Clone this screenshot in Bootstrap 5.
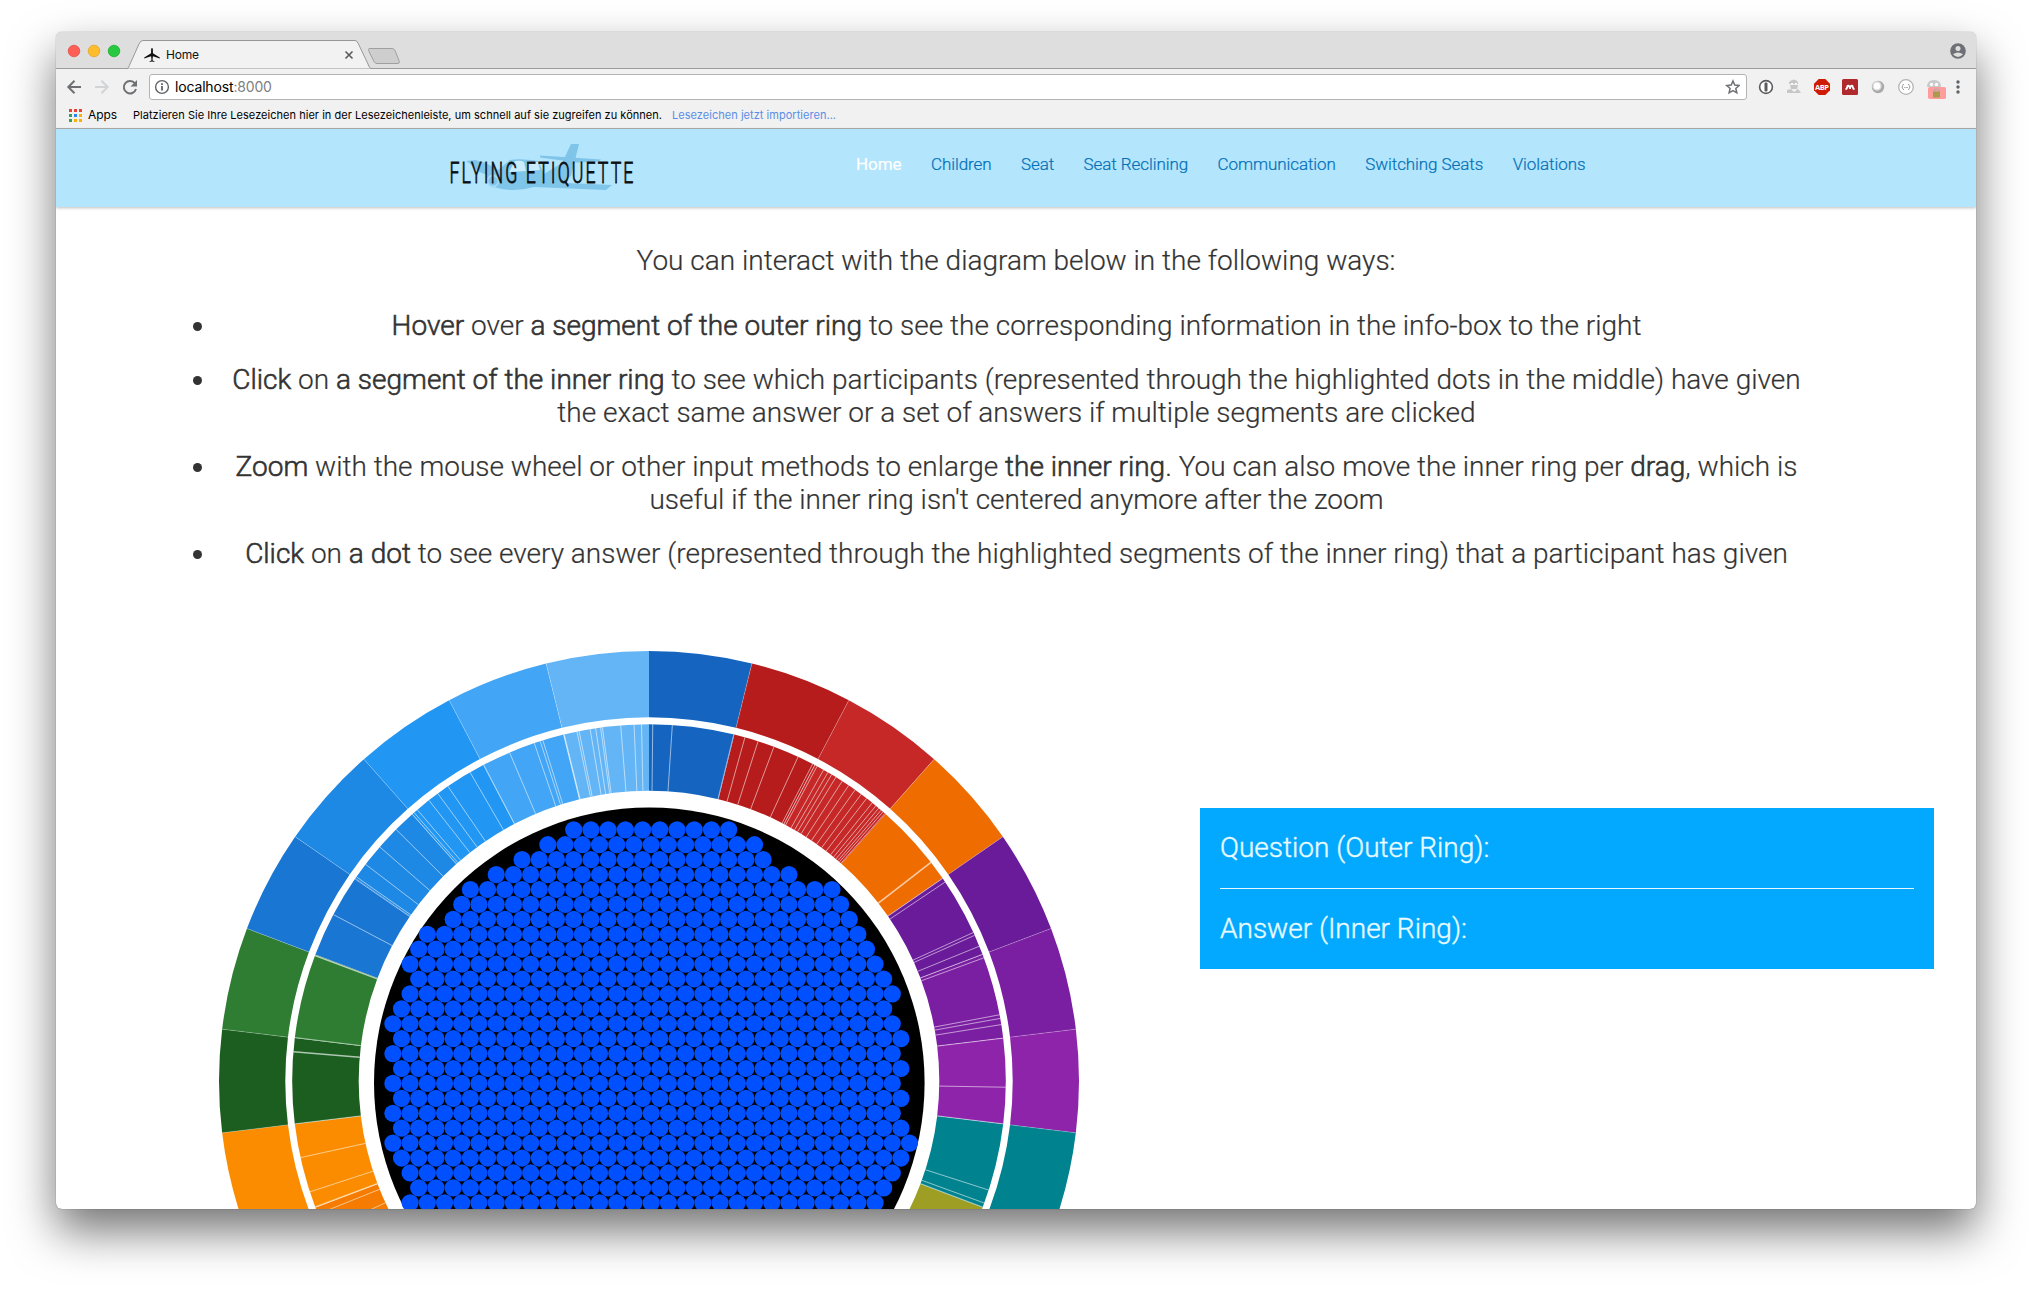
<!DOCTYPE html>
<html lang="en">
<head>
<meta charset="utf-8">
<title>Home</title>
<link href="https://cdn.jsdelivr.net/npm/bootstrap@5.3.0/dist/css/bootstrap.min.css" rel="stylesheet">
<style>
body{background:#fff;font-family:Roboto,"Liberation Sans",sans-serif;width:2032px;height:1289px;overflow:hidden;padding:32px 56px 80px}
.app-window{height:1177px;border-radius:6px;background:#fff;box-shadow:0 0 1px rgba(0,0,0,.6),0 22px 46px rgba(0,0,0,.55)}
.window-clip{height:1177px;border-radius:6px;overflow:hidden}
.tab-strip{height:37px;background:#dedede;border-bottom:1px solid #9c9c9c}
.tab-strip svg{display:block;height:37px}
.tools{background:#f1f1f1;height:60px;border-bottom:1px solid #b0acae;font-family:Inter,"Liberation Sans",sans-serif;color:#000}
.tool-row{height:37px;padding:5px 0 0 8px}
.omni{width:1598px;height:26px;background:#fff;border:1px solid #b3b3b3;border-radius:3px;margin-left:10px;padding:0 4px;font-size:14px;letter-spacing:-.16px}
.omni .host{margin-left:5px;line-height:18px;padding-bottom:1px}
.omni .port{color:#808080}
.omni .star{margin-right:2px}
.ext-icons{margin-left:6px}
.marks{height:18px;padding-left:13px;font-size:11px}
.marks .apps-label{font-size:12px;margin-left:6px;width:45px;letter-spacing:-.1px}
.site-nav{height:78px;background:#b3e5fc;box-shadow:0 1px 3px rgba(0,0,0,.25);position:relative}
.logo{margin-left:383px;margin-top:12px;display:block;overflow:visible}
.menu{margin-left:207px;padding-top:24px;gap:29.5px;font-size:17px;line-height:22px;font-weight:300;letter-spacing:-.08px;-webkit-text-stroke:.2px}
.menu a{color:#0270b8;text-decoration:none;padding:0}
.menu a.active{color:#fff;font-weight:400}
.site-body{font-size:28px;line-height:33px;font-weight:300;color:#333}
.intro{padding:37px 160px 0;text-align:center;-webkit-text-stroke:.2px #333}
.intro h2{font-size:28px;line-height:33px;font-weight:300;margin:0 0 32px}
.intro ul{margin:0;padding:0 0 0 1px}
.intro li{margin-bottom:21px}
.intro b{font-weight:300;-webkit-text-stroke:.6px #333}
.ring-row{padding-top:16px}
.diagram{display:block;margin-left:160px}
.info{width:734px;height:161px;background:#03a9ff;color:#e8fbff;margin:201px 0 0 120px;padding:23px 20px 0;-webkit-text-stroke:.4px #e8fbff}
.info hr{margin:24px 0 23px;border:0;border-top:1px solid #fff;opacity:.9}
</style>
<script src="https://cdn.jsdelivr.net/npm/bootstrap@5.3.0/dist/js/bootstrap.bundle.min.js"></script>
</head>
<body>
<div class="app-window"><div class="window-clip">
  <div class="tab-strip">
    <svg width="1920" height="37" viewBox="56 32 1920 37" font-family="Inter,sans-serif">
      <circle cx="74" cy="51" r="5.8" fill="#ff5f57" stroke="#e2463f" stroke-width=".7"/>
      <circle cx="94" cy="51" r="5.8" fill="#ffbd2e" stroke="#e1a116" stroke-width=".7"/>
      <circle cx="114" cy="51" r="5.8" fill="#28c940" stroke="#12ac28" stroke-width=".7"/>
      <path d="M126 69C129 68.500 129 66 130 64L139 44Q140.500 40.500 143 40.500H355Q357 40.500 358.500 44L368 64C369 67 370 68.500 372 69Z" fill="#f2f2f2" stroke="#979797"/>
      <path d="M152 48.500c.8 0 .9 1 .9 2v3.300l6.900 4.200v1l-6.900-2.300-.4 4 2 1.200v.7l-2.500-.5-2.500.5v-.7l2-1.200-.4-4-6.900 2.300V58l6.900-4.200v-3.300c0-1 .1-2 .9-2Z" fill="#111" transform="translate(0 -.5)"/>
      <text x="166" y="59" font-size="12" fill="#111" textLength="33">Home</text>
      <path d="m345.500 51.500 7 7m0-7-7 7" stroke="#5a5a5a" stroke-width="1.600"/>
      <path d="M369 48.500h23q2 0 3 2l4 10q1 3-1 3h-21q-2 0-3-2l-5-10q-1-3 0-3Z" fill="#cecece" stroke="#9f9f9f"/>
      <circle cx="1958" cy="51" r="7.800" fill="#6d7175"/><circle cx="1958" cy="48.500" r="2.500" fill="#dedede"/><path d="M1953 54.200q5-3.600 10 0-5 5.600-10 0Z" fill="#dedede"/>
    </svg>
  </div>
  <div class="tools">
    <div class="tool-row d-flex align-items-start">
      <svg width="75" height="26" viewBox="64 74 75 26" fill="none" stroke-width="2">
        <path d="M81 87H68.500M74.500 80.800 68.300 87l6.200 6.200" stroke="#6e7074"/>
        <path d="M95 87h12.500m-6-6.200 6.200 6.200-6.200 6.200" stroke="#d2d3d5"/>
        <path d="M135 83.500A6.200 6.200 0 1 0 136 89" stroke="#6e7074"/><path d="M137 80v6.500h-6.500Z" fill="#6e7074"/>
      </svg>
      <div class="omni d-flex align-items-center">
        <svg width="16" height="16" viewBox="0 0 16 16"><circle cx="8" cy="8" r="6.400" fill="none" stroke="#5f6368" stroke-width="1.400"/><path d="M8 7v4.500M8 4.300v1.700" stroke="#5f6368" stroke-width="1.800"/></svg>
        <span class="host">localhost<span class="port">:8000</span></span>
        <svg class="ms-auto star" width="16" height="16" viewBox="0 0 16 16"><path d="m10 2 1.700 4.100 4.400.4-3.300 2.900 1 4.400-3.800-2.300-3.900 2.300 1-4.400-3.300-2.900 4.400-.4Z" transform="translate(-1 0)" fill="none" stroke="#6e7074" stroke-width="1.500"/></svg>
      </div>
      <svg class="ext-icons" width="216" height="28" viewBox="1753 74 216 28">
        <circle cx="1766" cy="87" r="6.400" fill="#fff" stroke="#5c5c5f" stroke-width="1.600"/><rect x="1764.500" y="82.500" width="3" height="9" rx="1" fill="#5c5c5f"/>
        <g fill="#c6c6c6"><path d="M1789 82q5-5 9 0v2h-9ZM1790 85h8l-1 4h-6ZM1787 90l4-1 3 3 4-3 3 4H1787Z"/><path d="M1791 83.500h2m2 0h2" stroke="#fff"/></g>
        <path d="M1818.700 79h6.600l4.700 4.700v6.600l-4.700 4.700h-6.600l-4.700-4.700v-6.600Z" fill="#d01b04"/><text x="1822" y="89.900" font-family="Open Sans" font-weight="700" font-size="7.500" fill="#fff" text-anchor="middle" textLength="14">ABP</text>
        <rect x="1842" y="79" width="16" height="16" rx="1.500" fill="#b02a2d"/><path d="M1845.500 89.300q1.500-.5 1.700-2.200.4-2 1.500-1.300l1.300 1.800 1.300-1.800q1.100-.7 1.500 1.300.2 1.700 1.700 2.200M1850 87.500v1.500" fill="none" stroke="#fff" stroke-width="1.900"/>
        <circle cx="1878" cy="87" r="6.200" fill="#a9a9a9"/><circle cx="1877" cy="86" r="4.700" fill="#ddd"/><circle cx="1877" cy="86" r="3.200" fill="#fff"/>
        <circle cx="1906" cy="87" r="7.300" fill="#fff" stroke="#b3b3b3" stroke-width="1.300"/><path d="M1904 84.300q-1.500 0-1.300 1.500 0 1.200-1 1.200 1 0 1 1.200-.2 1.500 1.300 1.500m4-5.400q1.500 0 1.300 1.500 0 1.200 1 1.200-1 0-1 1.200.2 1.500-1.300 1.500" fill="none" stroke="#999" stroke-width=".9"/><path d="M1904.300 87.500h3.600" stroke="#999" stroke-dasharray="1 .4"/>
        <path d="M1927 87q0-7 7-7t7 7Z" fill="#c9c9c9"/><circle cx="1931.500" cy="84.500" r="1.700" fill="#fff"/><circle cx="1936.500" cy="84.500" r="1.700" fill="#fff"/>
        <rect x="1928" y="87" width="18" height="12" rx="1.800" fill="#ff9d9d"/><path d="M1934 92v-1.500q2.500-3 5 0V92" fill="none" stroke="#aaa" stroke-width="1.200"/><rect x="1933" y="91.500" width="7" height="6" fill="#a99b4c"/>
        <g fill="#5f6368"><circle cx="1958" cy="82" r="1.700"/><circle cx="1958" cy="87" r="1.700"/><circle cx="1958" cy="92" r="1.700"/></g>
      </svg>
    </div>
    <div class="marks d-flex align-items-center">
      <svg width="13" height="13" viewBox="0 0 13 13"><path d="M0 0h3v3H0Zm5 0h3v3H5Zm5 0h3v3h-3Z" fill="#ea4335"/><path d="M0 5h3v3H0Zm0 5h3v3H0Z" fill="#34a05a"/><path d="M5 5h3v3H5Z" fill="#2a86f0"/><path d="M10 5h3v3h-3ZM5 10h3v3H5Zm5 0h3v3h-3Z" fill="#fbb008"/></svg>
      <span class="apps-label">Apps</span>
      <svg width="712" height="18" font-size="11"><text x="0" y="13" textLength="529">Platzieren Sie Ihre Lesezeichen hier in der Lesezeichenleiste, um schnell auf sie zugreifen zu können.</text><text x="539" y="13" fill="#5a8ee6" textLength="164">Lesezeichen jetzt importieren...</text></svg>
    </div>
  </div>
  <nav class="site-nav d-flex align-items-start">
    <svg class="logo" width="210" height="60" viewBox="439 141 210 60">
      <g fill="#7fc4e9"><path d="M571 144h8l-8 32-12 10-6 0-24-3 33-20Z"/><path d="M540 155.500l61 4-2 2-22 1-37-5Z"/><path d="M466 161l9-1 11 3 12 7 12-10q10-2 28 1l8 17 20 5 46 2-6 5-72-3q-20 6-40 0-10-3-7-12-10-3-14-9Z"/></g>
      <path d="M515 161q6-1 9 1l2 9-17 1Zm13 0 10 1 2 8-12 1Z" fill="#c9edfd"/>
      <circle cx="493" cy="181" r="5.500" fill="none" stroke="#a3d9f5" stroke-width="2"/>
      <text x="449.500" y="183" font-family="Roboto,sans-serif" font-weight="300" font-size="29.500" letter-spacing="3.500" fill="#0a0f12" stroke="#0a0f12" stroke-width=".8" textLength="186" lengthAdjust="spacingAndGlyphs">FLYING ETIQUETTE</text>
    </svg>
    <div class="menu d-flex"><a href="#" class="active">Home</a><a href="#">Children</a><a href="#">Seat</a><a href="#">Seat Reclining</a><a href="#">Communication</a><a href="#">Switching Seats</a><a href="#">Violations</a></div>
  </nav>
  <main class="site-body">
    <section class="intro">
      <h2>You can interact with the diagram below in the following ways:</h2>
      <ul>
        <li><b>Hover</b> over <b>a segment of the outer ring</b> to see the corresponding information in the info-box to the right</li>
        <li><b>Click</b> on <b>a segment of the inner ring</b> to see which participants (represented through the highlighted dots in the middle) have given the exact same answer or a set of answers if multiple segments are clicked</li>
        <li><b>Zoom</b> with the mouse wheel or other input methods to enlarge <b>the inner ring</b>. You can also move the inner ring per <b>drag</b>, which is useful if the inner ring isn't centered anymore after the zoom</li>
        <li><b>Click</b> on <b>a dot</b> to see every answer (represented through the highlighted segments of the inner ring) that a participant has given</li>
      </ul>
    </section>
    <section class="d-flex align-items-start ring-row">
      <svg class="diagram" id="diagram" width="864" height="602" viewBox="216 607 864 602"></svg>
      <div class="info"><div>Question (Outer Ring):</div><hr><div>Answer (Inner Ring):</div></div>
    </section>
  </main>
</div></div>
<script>
const svg = document.getElementById('diagram');
const CX = 649, CY = 1081, STEP = 360 / 26;
const point = (r, a) => { const t = a * Math.PI / 180; return (CX + r * Math.sin(t)).toFixed(2) + ' ' + (CY - r * Math.cos(t)).toFixed(2); };
const sector = (r0, r1, a, b, c) => `<path d="M${point(r1,a)}A${r1} ${r1} 0 0 1 ${point(r1,b)}L${point(r0,b)}A${r0} ${r0} 0 0 0 ${point(r0,a)}Z" fill="${c}"/>`;
const colors = {'-9':'#f57c00','-8':'#fb8c00','-7':'#1b5e20','-6':'#2e7d32','-5':'#1976d2','-4':'#1e88e5','-3':'#2196f3','-2':'#42a5f5','-1':'#64b5f6',
  0:'#1565c0',1:'#b71c1c',2:'#c62828',3:'#ef6c00',4:'#6a1b9a',5:'#7b1fa2',6:'#8e24aa',7:'#00838f',8:'#9e9d24'};
let out = '';
for (const k in colors) {
  const a = k * STEP, b = a + STEP;
  out += sector(363.7, 430, a, b, colors[k]) + sector(290.3, 356.8, a, b, colors[k]);
}
// Answer dividers of the inner ring, in degrees clockwise from the top
const thin = [.6,3.75,13.75,15.6,17.8,20.5,24.7,27.3,27.7,28.1,29.3,30.1,30.8,31.6,32.8,34.05,35.3,36.5,37.6,38.75,39.5,40.1,40.6,41,41.4,55.4,56.1,65.4,65.9,67.8,69.2,69.8,79.3,79.9,80.9,83.1,91,96.9,107.8,110,110.7,
  -1.2,-2.4,-4.55,-7.5,-7.8,-8.6,-9.5,-11.3,-11.65,-17.3,-17.75,-18.75,-23,-27.6,-30.1,-34.3,-36.3,-38.1,-40.5,-41.2,-41.6,-45.15,-49,-52.6,-55.1,-55.5,-62.2,-83,-96.9,-102.4,-108.1,-111.9,-114.8];
const thick = [52.2,-13.8,-69.4,-85.3,-110.7];
const line = (a, r0, r1, w, o) => `<path d="M${point(r0,a)}L${point(r1,a)}" stroke="#fff" stroke-opacity="${o}" stroke-width="${w}"/>`;
thin.forEach(a => out += line(a, 290.3, 356.8, 1, .55));
thick.forEach(a => out += line(a, 290.3, 356.8, 1.5, .65));
for (let k = -8; k < 8; k++) if (k) out += line(k * STEP, 363.7, 430, .6, .4);
out += '<circle cx="649.3" cy="1082.8" r="275.3" fill="#000"/>';
// First and last dot of each row, in half steps of the hexagonal grid
const rows = [[0,18],[-3,21],[-6,22],[-9,25],[-12,30],[-13,31],[-14,32],[-17,33],[-18,34],[-19,35],[-18,36],[-19,37],[-20,36],[-21,37],[-20,38],[-21,37],[-20,38],[-21,37],[-20,38],[-21,37],[-20,38],[-21,39],[-20,38],[-19,37],[-18,36],[-19,35]];
rows.forEach(([from, to], i) => {
  for (let h = from; h <= to; h += 2) out += `<circle cx="${(573.7 + h * 8.61).toFixed(2)}" cy="${(829.8 + i * 14.92).toFixed(2)}" r="8.6" fill="#0050ff"/>`;
});
svg.innerHTML = out;
</script>
</body>
</html>
